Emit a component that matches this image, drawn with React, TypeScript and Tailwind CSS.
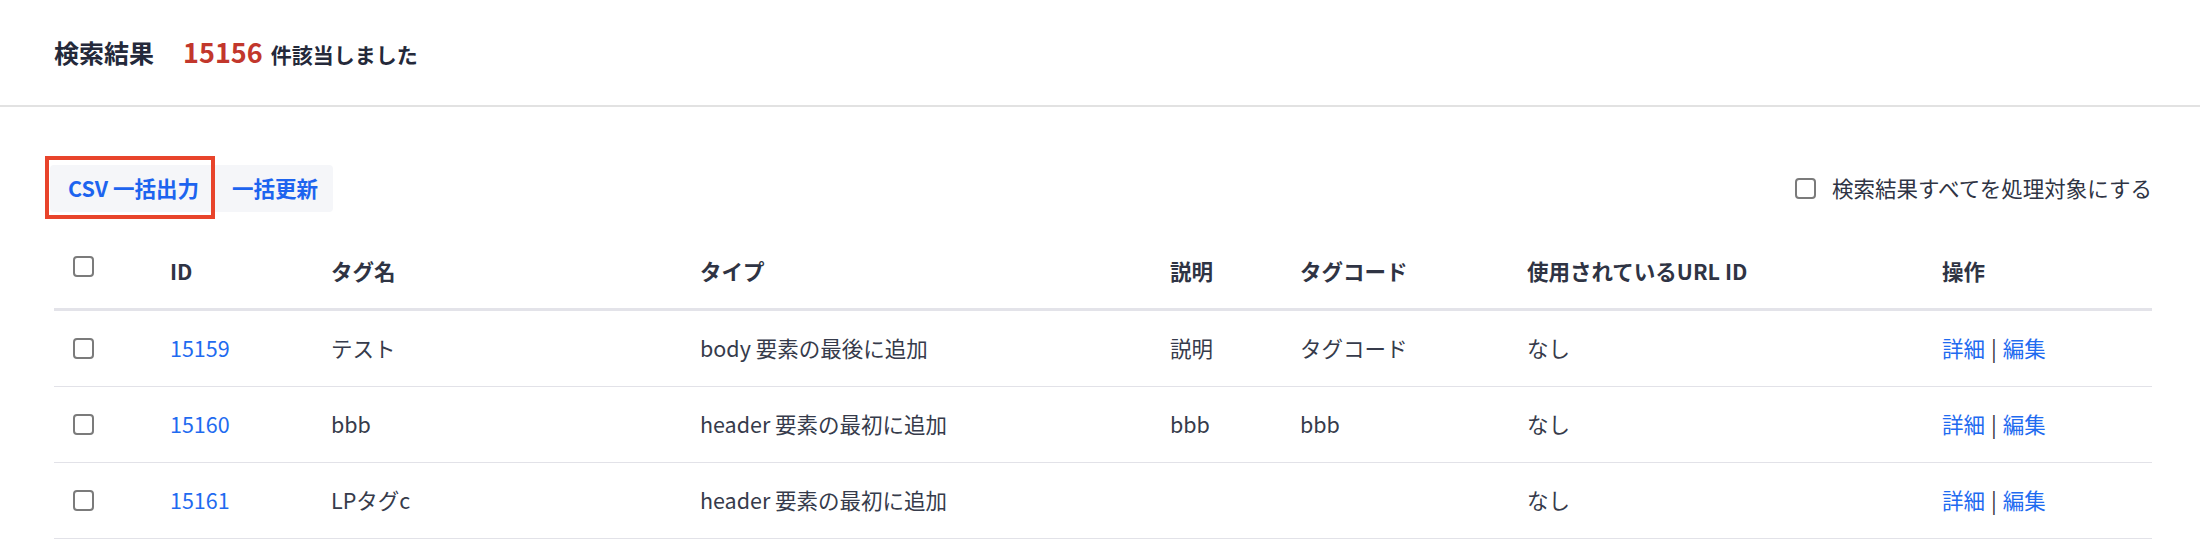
import React from "react";

const cols = "grid grid-cols-[97px_161px_369px_470px_130px_227px_415px_229px]";

function Box() {
  return <span className="block w-[21px] h-[21px] rounded-[4px] border-2 border-[#7b7b7b] bg-white" />;
}

const rows = [
  { id: "15159", name: "テスト", type: "body 要素の最後に追加", desc: "説明", code: "タグコード", url: "なし" },
  { id: "15160", name: "bbb", type: "header 要素の最初に追加", desc: "bbb", code: "bbb", url: "なし" },
  { id: "15161", name: "LPタグc", type: "header 要素の最初に追加", desc: "", code: "", url: "なし" },
];

export default function App() {
  return (
    <div className="w-[2200px] h-[554px] bg-white text-[#363b4b] font-['Noto_Sans_CJK_JP','Noto_Sans',sans-serif]">
      <div className="h-[107px] border-b-2 border-[#e2e2e2] pl-[54px] flex items-center">
        <div className="flex items-baseline">
          <span className="text-[25px] font-bold text-[#24293a]">検索結果</span>
          <span className="ml-[29px] text-[27px] font-bold text-[#c2372c]">15156</span>
          <span className="ml-[8px] text-[21px] font-bold text-[#24293a]">件該当しました</span>
        </div>
      </div>

      <div className="pl-[50px] pr-[48px] pt-[58px] flex items-center justify-between">
        <div className="relative flex">
          <div className="absolute left-[-5px] top-[-9px] w-[170px] h-[63px] border-4 border-[#e8442b] pointer-events-none" />
          <button className="h-[47px] px-[18px] bg-[#f5f6f9] rounded-l-[4px] text-[21.5px] font-bold text-[#1d64ef]">CSV 一括出力</button>
          <button className="h-[47px] px-[15px] bg-[#f5f6f9] rounded-r-[4px] text-[21.5px] font-bold text-[#1d64ef]">一括更新</button>
        </div>
        <label className="flex items-center gap-[16px] text-[21.5px] text-[#2f3444]">
          <Box />
          <span>検索結果すべてを処理対象にする</span>
        </label>
      </div>

      <div className="pl-[54px] pr-[48px] mt-[23px]">
        <div className={`${cols} h-[76px] border-b-[3px] border-[#e3e3e9] items-center text-[21.5px] font-bold text-[#2f3444]`}>
          <div className="pl-[19px] mb-[10px]"><Box /></div>
          <div className="pl-[19px]">ID</div>
          <div className="pl-[19px]">タグ名</div>
          <div className="pl-[19px]">タイプ</div>
          <div className="pl-[19px]">説明</div>
          <div className="pl-[19px]">タグコード</div>
          <div className="pl-[19px]">使用されているURL ID</div>
          <div className="pl-[19px]">操作</div>
        </div>
        {rows.map((r) => (
          <div key={r.id} className={`${cols} h-[76px] border-b border-[#e2e2e8] items-center text-[21.5px]`}>
            <div className="pl-[19px]"><Box /></div>
            <div className="pl-[19px] text-[#1f6bf0]">{r.id}</div>
            <div className="pl-[19px]">{r.name}</div>
            <div className="pl-[19px]">{r.type}</div>
            <div className="pl-[19px]">{r.desc}</div>
            <div className="pl-[19px]">{r.code}</div>
            <div className="pl-[19px]">{r.url}</div>
            <div className="pl-[19px] flex items-center">
              <span className="text-[#1f6bf0]">詳細</span>
              <span className="mx-[6px] text-[#2f3444]">|</span>
              <span className="text-[#1f6bf0]">編集</span>
            </div>
          </div>
        ))}
      </div>
    </div>
  );
}
